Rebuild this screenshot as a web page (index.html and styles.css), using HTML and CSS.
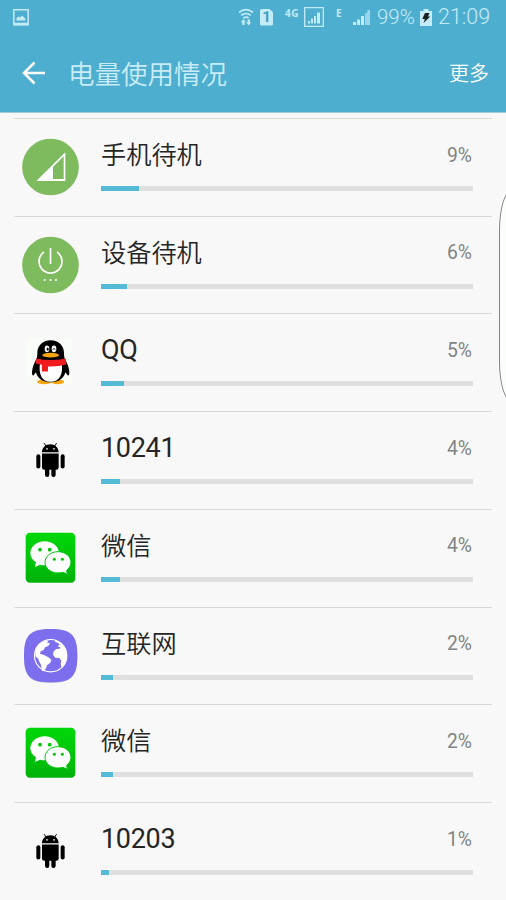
FILE: index.html
```html
<!DOCTYPE html>
<html lang="zh-CN">
<head>
<meta charset="utf-8">
<title>电量使用情况</title>
<link rel="stylesheet" href="styles.css">
</head>
<body>
<svg class="defs" aria-hidden="true">
  <symbol id="wechat" viewBox="30 25 180 180">
    <linearGradient id="wg" x1="0" y1="0" x2="0" y2="1"><stop offset="0" stop-color="#00d80a"/><stop offset="1" stop-color="#00b20a"/></linearGradient>
    <rect x="47" y="39" width="149" height="150" rx="13" fill="url(#wg)"/>
    <path fill="#fff" d="M104 65c24 0 43 15 43 36s-19 36-43 36c-6 0-10-1-14-2l-15 7 3-14c-10-6-17-16-17-27 0-21 19-36 43-36z"/>
    <path fill="#fff" stroke="#00c40a" stroke-width="3" d="M144 96c22 0 39 14 39 32 0 10-6 18-13 24l2 12-13-6c-4 1-9 2-15 2-22 0-39-14-39-32s17-32 39-32z"/>
    <g fill="#00c40a"><circle cx="90" cy="90" r="5.5"/><circle cx="119" cy="90" r="5.5"/><circle cx="133" cy="119" r="4.5"/><circle cx="157" cy="119" r="4.5"/></g>
  </symbol>
  <symbol id="android" viewBox="30 331.5 180 180">
    <path d="M96 398c0-14 11-24 25-24s25 10 25 24zM96 402h50v42q0 7-7 7h-2v15a6 6 0 0 1-13 0v-15h-6v15a6 6 0 0 1-13 0v-15h-2q-7 0-7-7z"/>
    <rect x="79" y="404" width="12" height="43" rx="6"/><rect x="152" y="404" width="12" height="43" rx="6"/>
    <path d="m103 372 6 9m30-9-6 9" stroke="#000" stroke-width="3" stroke-linecap="round"/>
    <circle cx="111" cy="388" r="2.6" fill="#f8f8f8"/><circle cx="132" cy="388" r="2.6" fill="#f8f8f8"/>
  </symbol>
</svg>
<header class="header">
  <div class="status">
    <svg class="shot" viewBox="0 0 16 17"><path fill="none" stroke="currentColor" stroke-width="1.5" d="M.8.8h14.4v15H.8z"/><path fill="currentColor" d="M3.500 11.500V9l2-1.500 1.500 1L9 6.500l3.300 3v2zM1 13.700h14v2.500H1z"/></svg>
    <svg class="wifi" viewBox="0 0 16 18"><g fill="none" stroke="currentColor" stroke-width="1.700"><path d="M1 4.300q7-5.500 14 0M3.200 7.300q4.800-3.600 9.600 0M5.400 10.100q2.600-1.900 5.200 0"/></g><path fill="currentColor" d="m5.300 11 2.500 3.200H6.600V17H4.200v-2.800H3zM10.700 17.500l2.500-3.200H12v-2.800H9.600v2.800H8.200z"/></svg>
    <span class="sim">1</span>
    <span class="net net-4g">4G</span>
    <svg class="sig-box" viewBox="0 0 20 20"><path fill="none" stroke="currentColor" stroke-width="1.300" d="M.7.700h18.600v18.600H.7z"/><path fill="currentColor" d="M4 14h2v2.500H4zM7 11.500h2v5H7zM10 9h2v7.500h-2zM13 5.500h3v11h-3z"/></svg>
    <span class="net net-e">E</span>
    <svg class="sig" viewBox="0 0 18 17"><path fill="currentColor" d="M0 13h3v3H0zM4 10.500h3V16H4zM8 7h3v9H8z"/><path fill="currentColor" opacity=".65" d="M12 4h2.300v12H12zM14.300 1H17v15h-2.700z"/></svg>
    <span class="pct">99%</span>
    <svg class="battery" viewBox="0 0 12 17"><path fill="currentColor" d="M3.500 0h5v2H12v15H0V2h3.500z"/><path fill="#182024" d="M5 4h4.500L8 7.500h2.300L3.500 14l1.400-4H2.300z"/></svg>
    <span class="clock">21:09</span>
  </div>
  <div class="appbar">
    <svg class="back" viewBox="0 0 24 24"><path fill="none" stroke="currentColor" stroke-width="2.500" d="M12.500 1.500 2 12l10.500 10.500M2 12h21"/></svg>
    <h1 class="title">电量使用情况</h1>
    <span class="more">更多</span>
  </div>
</header>
<main class="list">
  <div class="row">
    <svg class="icon" viewBox="30 37 180 180"><circle cx="121.500" cy="127" r="85" fill="#7eba5e"/><path fill="#fff" fill-rule="evenodd" d="M79 169 166 83v86zM129 127v36h32V95z"/></svg>
    <div class="info"><div class="line"><span class="name">手机待机</span><span class="value">9%</span></div><div class="track"><div class="fill" style="width:10.100%"></div></div></div>
  </div>
  <div class="row">
    <svg class="icon" viewBox="30 330 180 180"><circle cx="121.500" cy="420" r="85" fill="#7eba5e"/><g fill="none" stroke="#fff" stroke-width="5"><path d="M102 381a34.500 34.500 0 1 0 39 0"/><path d="M121.500 369v48"/></g><g fill="#fff"><circle cx="104" cy="465" r="3.200"/><circle cx="121.500" cy="465" r="3.200"/><circle cx="138" cy="465" r="3.200"/></g></svg>
    <div class="info"><div class="line"><span class="name">设备待机</span><span class="value">6%</span></div><div class="track"><div class="fill" style="width:7.100%"></div></div></div>
  </div>
  <div class="row">
    <svg class="icon" viewBox="30 38.400 180 180"><rect x="52" y="54" width="136" height="143" rx="12" fill="#fafcf8"/><ellipse cx="103" cy="188" rx="22" ry="7" fill="#f9a70c"/><ellipse cx="143" cy="188" rx="20" ry="7" fill="#f9a70c"/><path d="M122 63c25 0 40 17 40 39 0 9 1 14 4 20 6 12 12 26 12 38 0 7-2 10-5 8l-7-9c-4 18-20 30-44 30s-40-12-44-30l-7 9c-3 2-5-1-5-8 0-12 6-26 12-38 3-6 4-11 4-20 0-22 15-39 40-39z"/><path fill="#fff" d="M90 132q32 12 65 0c5 32-6 56-33 56s-37-24-32-56z"/><ellipse cx="111" cy="89" rx="7" ry="10" fill="#fff"/><ellipse cx="132" cy="89" rx="7" ry="10" fill="#fff"/><ellipse cx="113" cy="90" rx="3" ry="5"/><path d="M128 91q4-6 8 0" fill="none" stroke="#000" stroke-width="2.500"/><ellipse cx="122" cy="108" rx="25" ry="7" fill="#f9a70c"/><path fill="#f01c1f" d="M79 118q43 9 88 0l2 18q-26 7-55 6v15H96v-20q-11-1-19-4z"/></svg>
    <div class="info"><div class="line"><span class="name latin">QQ</span><span class="value">5%</span></div><div class="track"><div class="fill" style="width:6.200%"></div></div></div>
  </div>
  <div class="row">
    <svg class="icon"><use href="#android"/></svg>
    <div class="info"><div class="line"><span class="name latin">10241</span><span class="value">4%</span></div><div class="track"><div class="fill" style="width:5%"></div></div></div>
  </div>
  <div class="row">
    <svg class="icon"><use href="#wechat"/></svg>
    <div class="info"><div class="line"><span class="name">微信</span><span class="value">4%</span></div><div class="track"><div class="fill" style="width:5%"></div></div></div>
  </div>
  <div class="row">
    <svg class="icon" viewBox="30 316 180 180"><path fill="#c9c8d8" d="M122 328c62 0 80 18 80 79s-18 80-80 80-80-19-80-80 18-79 80-79z"/><path fill="#7d6eee" d="M122 325c62 0 80 18 80 80s-18 80-80 80-80-18-80-80 18-80 80-80z"/><circle cx="122" cy="405" r="48.500" fill="#7d6eee" stroke="#fff" stroke-width="3.500"/><path fill="#fff" d="M76 394c3-16 13-27 28-34l12-1-5 7 9 1-5 9-10 4-4 8-9 4-2 7 10 3 14 7 10 8-3 9-10 8-3 9-7 9-5-2-3-18-6-10-2-8-9-7zM137 359c15 5 26 15 31 29l3 18c0 17-7 29-16 37l-3-13 2-10-6-8-12-1-7-9 2-10 8-7 10-1 2-5-8-1 6-7-6-5-8-2z"/></svg>
    <div class="info"><div class="line"><span class="name">互联网</span><span class="value">2%</span></div><div class="track"><div class="fill" style="width:3.200%"></div></div></div>
  </div>
  <div class="row">
    <svg class="icon"><use href="#wechat"/></svg>
    <div class="info"><div class="line"><span class="name">微信</span><span class="value">2%</span></div><div class="track"><div class="fill" style="width:3.200%"></div></div></div>
  </div>
  <div class="row">
    <svg class="icon"><use href="#android"/></svg>
    <div class="info"><div class="line"><span class="name latin">10203</span><span class="value">1%</span></div><div class="track"><div class="fill" style="width:2.100%"></div></div></div>
  </div>
</main>
<div class="edge-handle"></div>
</body>
</html>
```
FILE: styles.css
```css
* { box-sizing: border-box; }
body {
  margin: 0;
  height: 900px;
  position: relative;
  overflow: hidden;
  background: #f8f8f8;
  color: #252525;
  font-family: Roboto, "Noto Sans CJK SC", sans-serif;
}
.defs { display: block; width: 0; height: 0; }
.header {
  height: 113px;
  background: #4eaed0;
  border-bottom: 1px solid #9ccbdc;
}
.status {
  display: flex;
  align-items: center;
  height: 34px;
  padding: 0 15px 0 13px;
  color: #c4ecf8;
}
.status svg { flex: none; }
.shot { width: 16px; height: 17px; }
.wifi { width: 16px; height: 18px; margin-left: auto; }
.sim {
  width: 13px;
  height: 17px;
  margin-left: 6px;
  border-radius: 2px;
  background: #c4ecf8;
  clip-path: polygon(0 0, 70% 0, 100% 22%, 100% 100%, 0 100%);
  color: #3b9fc4;
  font: bold 15px/17px Roboto, sans-serif;
  text-align: center;
}
.net {
  align-self: flex-start;
  margin-top: 7px;
  font: bold 10px/13px "Open Sans", sans-serif;
}
.net-4g { width: 19px; margin-left: 12px; letter-spacing: 0.5px; }
.sig-box { width: 20px; height: 20px; }
.net-e { width: 17px; margin-left: 12px; }
.sig { width: 18px; height: 17px; }
.pct { width: 44px; margin-left: 6px; margin-right: -1px; font-size: 20.500px; font-weight: 350; line-height: 24px; white-space: nowrap; }
.battery { width: 12px; height: 17px; }
.clock { width: 53px; margin-left: 6px; font-size: 21.500px; font-weight: 350; line-height: 24px; white-space: nowrap; }
.appbar {
  display: flex;
  align-items: center;
  height: 78px;
  padding: 0 17px 0 22px;
  color: #fff;
}
.back { width: 24px; height: 24px; }
.title {
  margin: 0 0 0 22px;
  color: #c9ecf7;
  font-family: "Noto Sans CJK SC", sans-serif;
  font-size: 26.500px;
  font-weight: 350;
  line-height: 40px;
}
.more {
  margin: 0 0 0 auto;
  font-family: "Noto Sans CJK SC", sans-serif;
  font-size: 20px;
  font-weight: 350;
  line-height: 30px;
}
.list { padding: 5px 14px 0; }
.row {
  display: flex;
  height: 97.720px;
  padding: 19px 19px 0 6px;
  border-top: 1px solid #d8d8d8;
}
.icon { flex: none; width: 60px; height: 60px; margin-top: -1px; }
.info { flex: 1; margin-left: 21px; }
.line {
  display: flex;
  justify-content: space-between;
  align-items: center;
  height: 34px;
}
.name { padding-top: 2px; font-size: 25.200px; font-weight: 350; line-height: 34px; }
.latin { padding-top: 0; font-size: 27px; font-weight: 380; letter-spacing: -0.3px; }
.value { margin-right: 1px; padding-top: 1px; color: #808483; font-size: 19.300px; line-height: 34px; }
.track { height: 5px; margin-top: 14px; background: #dfdfdf; }
.fill { height: 5px; background: #54bad6; }
.edge-handle {
  position: absolute;
  top: 190px;
  right: -22px;
  width: 29px;
  height: 212px;
  border: 1px solid #858585;
  border-radius: 13px / 40px;
  background: #fafdfa;
}
```
